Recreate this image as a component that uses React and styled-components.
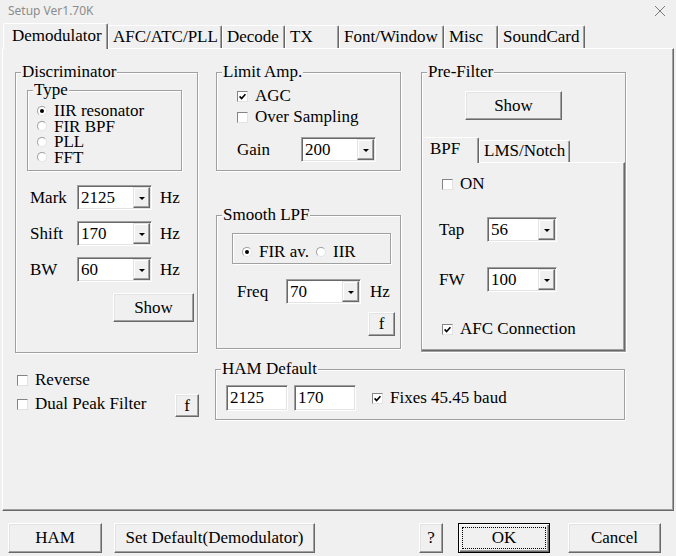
import React from "react";
import styled, { createGlobalStyle } from "styled-components";

const GlobalStyle = createGlobalStyle`
  html, body {
    margin: 0;
    padding: 0;
    background: #f0f0f0;
  }
  body {
    font-family: "Liberation Serif", "Times New Roman", serif;
    font-size: 17px;
    color: #000;
  }
`;

const Window = styled.div`
  width: 676px;
  height: 556px;
  overflow: hidden;
  display: flex;
  flex-direction: column;
  background: #f0f0f0;
`;

const TitleBar = styled.div`
  height: 21px;
  flex: none;
  display: flex;
  align-items: center;
  justify-content: space-between;
  padding: 0 10px 0 8px;
`;

const TitleText = styled.span`
  font-family: "Noto Sans", "Open Sans", sans-serif;
  font-size: 12px;
  color: #8c8c8c;
`;

const TabStrip = styled.div`
  height: 27px;
  flex: none;
  display: flex;
  align-items: flex-end;
  padding-left: 3px;
  position: relative;
  z-index: 1;
`;

const Tab = styled.div`
  width: ${(p) => p.$w}px;
  height: ${(p) => (p.$active ? 26 : 23)}px;
  margin-bottom: ${(p) => (p.$active ? -1 : 0)}px;
  box-sizing: border-box;
  padding: ${(p) => (p.$active ? "2px 0 0 8px" : "1px 0 0 4px")};
  line-height: 20px;
  white-space: nowrap;
  background: #f0f0f0;
  border-top: 1px solid #fff;
  border-left: 1px solid #fff;
  border-right: 1px solid #696969;
  box-shadow: inset -1px 0 0 #a0a0a0;
  border-radius: 2px 2px 0 0;
`;

const InnerTab = styled(Tab)`
  height: ${(p) => (p.$active ? 26 : 22)}px;
  padding: ${(p) => (p.$active ? "1px 0 0 7px" : "0 0 0 4px")};
`;

const Panel = styled.div`
  width: 672px;
  height: 463px;
  flex: none;
  margin-left: 2px;
  box-sizing: border-box;
  border: 1px solid;
  border-color: #fff #696969 #696969 #fff;
  box-shadow: inset -1px -1px 0 #a0a0a0;
  padding: 23px 0 0 12px;
  display: flex;
  flex-direction: column;
`;

const TopRow = styled.div`
  display: flex;
  align-items: flex-start;
`;

const Column = styled.div`
  display: flex;
  flex-direction: column;
  margin-left: ${(p) => p.$ml || 0}px;
  gap: ${(p) => p.$gap || 0}px;
`;

const BottomRow = styled.div`
  display: flex;
  align-items: flex-start;
  margin-top: 16px;
`;

const Group = styled.div`
  position: relative;
  box-sizing: border-box;
  width: ${(p) => p.$w}px;
  height: ${(p) => p.$h}px;
  margin: ${(p) => p.$m || 0};
  border: 1px solid #a0a0a0;
  box-shadow: inset 1px 1px 0 #fff, 1px 1px 0 #fff;
  display: flex;
  flex-direction: column;
  padding: ${(p) => p.$pad || 0};
  flex: none;
`;

const Legend = styled.span`
  position: absolute;
  top: -10px;
  left: 5px;
  padding: 0 1px;
  line-height: 18px;
  background: #f0f0f0;
  white-space: nowrap;
`;

const RadioList = styled.div`
  display: ${(p) => (p.$row ? "grid" : "flex")};
  grid-template-columns: 74px auto;
  flex-direction: column;
  padding: ${(p) => p.$pad};
`;

const RadioItem = styled.label`
  display: flex;
  align-items: center;
  gap: 7px;
  line-height: ${(p) => p.$lh || 16}px;
  white-space: nowrap;
`;

const RadioDot = styled.span`
  width: 10px;
  height: 10px;
  flex: none;
  box-sizing: border-box;
  border-radius: 50%;
  background: #fff;
  border: 1px solid;
  border-color: #a0a0a0 #e3e3e3 #e3e3e3 #a0a0a0;
  display: flex;
  align-items: center;
  justify-content: center;

  &::after {
    content: "";
    width: 4px;
    height: 4px;
    border-radius: 50%;
    background: ${(p) => (p.$on ? "#000" : "transparent")};
  }
`;

const CheckRow = styled.label`
  display: flex;
  align-items: center;
  gap: 7px;
  line-height: 20px;
  white-space: nowrap;
  margin: ${(p) => p.$m || 0};
`;

const CheckBoxBox = styled.span`
  width: 11px;
  height: 11px;
  flex: none;
  box-sizing: border-box;
  background: #fff;
  border: 1px solid;
  border-color: #848484 #e3e3e3 #e3e3e3 #848484;
  display: flex;
  align-items: center;
  justify-content: center;
`;

const FieldRow = styled.div`
  display: flex;
  align-items: center;
  height: 25px;
  margin: ${(p) => p.$m || 0};
`;

const Label = styled.span`
  width: ${(p) => p.$w}px;
  flex: none;
  line-height: 20px;
`;

const Unit = styled.span`
  margin-left: ${(p) => p.$ml || 8}px;
  line-height: 20px;
`;

const ComboBox = styled.div`
  width: ${(p) => p.$w || 75}px;
  height: 25px;
  flex: none;
  box-sizing: border-box;
  display: flex;
  background: #fff;
  border: 1px solid;
  border-color: #a0a0a0 #fff #fff #a0a0a0;
  box-shadow: inset 1px 1px 0 #696969, inset -1px -1px 0 #e3e3e3;
  padding: 1px;
`;

const ComboText = styled.span`
  flex: 1;
  padding-left: 2px;
  line-height: 21px;
`;

const DropButton = styled.span`
  width: 17px;
  flex: none;
  box-sizing: border-box;
  background: #f0f0f0;
  border: 1px solid;
  border-color: #e3e3e3 #696969 #696969 #e3e3e3;
  box-shadow: inset -1px -1px 0 #a0a0a0, inset 1px 1px 0 #fff;
  display: flex;
  align-items: center;
  justify-content: center;

  &::after {
    content: "";
    border-left: 3px solid transparent;
    border-right: 3px solid transparent;
    border-top: 3px solid #000;
    margin-top: 1px;
  }
`;

const TextBox = styled.div`
  width: ${(p) => p.$w}px;
  height: 26px;
  flex: none;
  box-sizing: border-box;
  background: #fff;
  border: 1px solid;
  border-color: #a0a0a0 #fff #fff #a0a0a0;
  box-shadow: inset 1px 1px 0 #696969, inset -1px -1px 0 #e3e3e3;
  padding: 1px 0 0 3px;
  line-height: 22px;
`;

const Button = styled.button`
  width: ${(p) => p.$w}px;
  height: ${(p) => p.$h || 29}px;
  flex: none;
  box-sizing: border-box;
  padding: 0;
  margin: ${(p) => p.$m || 0};
  align-self: ${(p) => p.$align || "auto"};
  font: inherit;
  color: #000;
  background: #f0f0f0;
  border: 1px solid;
  border-color: #fff #696969 #696969 #fff;
  box-shadow: inset -1px -1px 0 #a0a0a0, inset 1px 1px 0 #e3e3e3;
  position: relative;
`;

const DefaultButton = styled(Button)`
  border-color: #000;
  box-shadow: inset 1px 1px 0 #fff, inset -1px -1px 0 #696969,
    inset -2px -2px 0 #a0a0a0;

  &::after {
    content: "";
    position: absolute;
    inset: 3px;
    border: 1px dotted #000;
  }
`;

const InnerTabs = styled.div`
  flex: 1;
  display: flex;
  flex-direction: column;
  margin-top: 17px;
`;

const InnerTabStrip = styled.div`
  height: 25px;
  display: flex;
  align-items: flex-end;
  position: relative;
  z-index: 1;
`;

const InnerPage = styled.div`
  flex: 1;
  box-sizing: border-box;
  border-top: 1px solid #fff;
  border-right: 1px solid #696969;
  border-bottom: 1px solid #696969;
  box-shadow: inset -1px -1px 0 #a0a0a0;
  padding: 11px 0 0 17px;
  display: flex;
  flex-direction: column;
`;

const LeftArea = styled.div`
  width: 184px;
  margin-top: 1px;
  padding-left: 2px;
  box-sizing: border-box;
  display: flex;
  flex-direction: column;
  gap: 4px;
`;

const SplitRow = styled.div`
  display: flex;
  justify-content: space-between;
  align-items: flex-start;
`;

const HamRow = styled.div`
  display: flex;
  align-items: center;
  gap: 6px;
`;

const BottomBar = styled.div`
  height: 45px;
  flex: none;
  box-sizing: border-box;
  padding: 12px 15px 0 8px;
  display: flex;
  align-items: flex-start;
`;

function Check({ on, children, m }) {
  return (
    <CheckRow $m={m}>
      <CheckBoxBox>
        {on && (
          <svg width="7" height="7" viewBox="0 0 7 7">
            <polyline points="0.6,3.4 2.6,5.5 6.4,1.2" fill="none" stroke="#000" strokeWidth="1.6" />
          </svg>
        )}
      </CheckBoxBox>
      {children}
    </CheckRow>
  );
}

function Radio({ on, children, lh }) {
  return (
    <RadioItem $lh={lh}>
      <RadioDot $on={on} />
      {children}
    </RadioItem>
  );
}

function Combo({ value, w }) {
  return (
    <ComboBox $w={w}>
      <ComboText>{value}</ComboText>
      <DropButton />
    </ComboBox>
  );
}

const tabs = [
  ["Demodulator", 105],
  ["AFC/ATC/PLL", 114],
  ["Decode", 63],
  ["TX", 54],
  ["Font/Window", 105],
  ["Misc", 54],
  ["SoundCard", 87],
];

export default function App() {
  return (
    <Window>
      <GlobalStyle />
      <TitleBar>
        <TitleText>Setup Ver1.70K</TitleText>
        <svg width="12" height="12" viewBox="0 0 12 12">
          <path d="M1 1 L11 11 M11 1 L1 11" stroke="#7a7a7a" strokeWidth="1" />
        </svg>
      </TitleBar>

      <TabStrip>
        {tabs.map(([name, w], i) => (
          <Tab key={name} $w={w} $active={i === 0}>
            {name}
          </Tab>
        ))}
      </TabStrip>

      <Panel>
        <TopRow>
          <Group $w={183} $h={281}>
            <Legend>Discriminator</Legend>
            <Group $w={155} $h={81} $m="17px 0 0 11px">
              <Legend>Type</Legend>
              <RadioList $pad="12px 0 0 9px">
                <Radio on lh={15.5}>IIR resonator</Radio>
                <Radio lh={15.5}>FIR BPF</Radio>
                <Radio lh={15.5}>PLL</Radio>
                <Radio lh={15.5}>FFT</Radio>
              </RadioList>
            </Group>
            <FieldRow $m="14px 0 0 14px">
              <Label $w={47}>Mark</Label>
              <Combo value="2125" />
              <Unit>Hz</Unit>
            </FieldRow>
            <FieldRow $m="11px 0 0 14px">
              <Label $w={47}>Shift</Label>
              <Combo value="170" />
              <Unit>Hz</Unit>
            </FieldRow>
            <FieldRow $m="11px 0 0 14px">
              <Label $w={47}>BW</Label>
              <Combo value="60" />
              <Unit>Hz</Unit>
            </FieldRow>
            <Button $w={81} $m="11px 3px 0 0" $align="flex-end">
              Show
            </Button>
          </Group>

          <Column $ml={18} $gap={44}>
            <Group $w={185} $h={99} $pad="13px 0 0 20px">
              <Legend>Limit Amp.</Legend>
              <Check on>AGC</Check>
              <Check m="1px 0 0 0">Over Sampling</Check>
              <FieldRow $m="10px 0 0 0">
                <Label $w={64}>Gain</Label>
                <Combo value="200" />
              </FieldRow>
            </Group>

            <Group $w={185} $h={134}>
              <Legend>Smooth LPF</Legend>
              <Group $w={159} $h={31} $m="17px 0 0 15px">
                <RadioList $row $pad="10px 0 0 9px">
                  <Radio on>FIR av.</Radio>
                  <Radio>IIR</Radio>
                </RadioList>
              </Group>
              <FieldRow $m="15px 0 0 20px">
                <Label $w={49}>Freq</Label>
                <Combo value="70" />
                <Unit $ml={9}>Hz</Unit>
              </FieldRow>
              <Button $w={27} $h={24} $m="8px 5px 0 0" $align="flex-end">
                f
              </Button>
            </Group>
          </Column>

          <Group $w={205} $h={280} $m="0 0 0 20px">
            <Legend>Pre-Filter</Legend>
            <Button $w={97} $m="18px 0 0 43px">
              Show
            </Button>
            <InnerTabs>
              <InnerTabStrip>
                <InnerTab $w={57} $active>
                  BPF
                </InnerTab>
                <InnerTab $w={91}>LMS/Notch</InnerTab>
              </InnerTabStrip>
              <InnerPage>
                <Check m="0 0 0 3px">ON</Check>
                <FieldRow $m="23px 0 0 0">
                  <Label $w={48}>Tap</Label>
                  <Combo value="56" w={70} />
                </FieldRow>
                <FieldRow $m="25px 0 0 0">
                  <Label $w={48}>FW</Label>
                  <Combo value="100" w={70} />
                </FieldRow>
                <Check on m="27px 0 0 3px">
                  AFC Connection
                </Check>
              </InnerPage>
            </InnerTabs>
          </Group>
        </TopRow>

        <BottomRow>
          <LeftArea>
            <Check>Reverse</Check>
            <SplitRow>
              <Check>Dual Peak Filter</Check>
              <Button $w={24} $h={23} $m="0 0 0 0">
                f
              </Button>
            </SplitRow>
          </LeftArea>
          <Group $w={410} $h={51} $m="0 0 0 16px" $pad="15px 0 0 10px">
            <Legend>HAM Default</Legend>
            <HamRow>
              <TextBox $w={62}>2125</TextBox>
              <TextBox $w={62}>170</TextBox>
              <Check on m="0 0 0 10px">
                Fixes 45.45 baud
              </Check>
            </HamRow>
          </Group>
        </BottomRow>
      </Panel>

      <BottomBar>
        <Button $w={94} $h={30}>HAM</Button>
        <Button $w={201} $h={30} $m="0 0 0 12px">
          Set Default(Demodulator)
        </Button>
        <Button $w={24} $h={30} $m="0 0 0 auto">
          ?
        </Button>
        <DefaultButton $w={92} $h={30} $m="0 0 0 15px">
          OK
        </DefaultButton>
        <Button $w={93} $h={30} $m="0 0 0 18px">
          Cancel
        </Button>
      </BottomBar>
    </Window>
  );
}
